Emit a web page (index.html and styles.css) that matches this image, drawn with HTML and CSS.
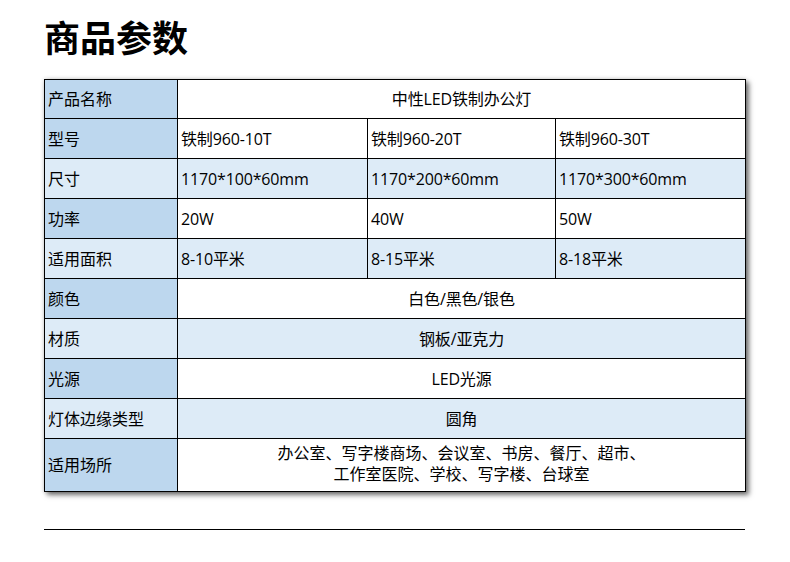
FILE: index.html
```html
<!DOCTYPE html>
<html lang="zh-CN">
<head>
<meta charset="utf-8">
<link rel="stylesheet" href="styles.css">
</head>
<body>
<div class="page">
  <h1 class="title">商品参数</h1>
  <table class="spec">
    <colgroup>
      <col class="c-label">
      <col class="c-val">
      <col class="c-val2">
      <col class="c-val">
    </colgroup>
    <tr class="first">
      <td class="label">产品名称</td>
      <td class="center" colspan="3">中性LED铁制办公灯</td>
    </tr>
    <tr>
      <td class="label">型号</td>
      <td>铁制960-10T</td>
      <td>铁制960-20T</td>
      <td>铁制960-30T</td>
    </tr>
    <tr class="alt">
      <td class="label">尺寸</td>
      <td>1170*100*60mm</td>
      <td>1170*200*60mm</td>
      <td>1170*300*60mm</td>
    </tr>
    <tr>
      <td class="label">功率</td>
      <td>20W</td>
      <td>40W</td>
      <td>50W</td>
    </tr>
    <tr class="alt">
      <td class="label">适用面积</td>
      <td>8-10平米</td>
      <td>8-15平米</td>
      <td>8-18平米</td>
    </tr>
    <tr>
      <td class="label">颜色</td>
      <td class="center" colspan="3">白色/黑色/银色</td>
    </tr>
    <tr class="alt">
      <td class="label">材质</td>
      <td class="center" colspan="3">钢板/亚克力</td>
    </tr>
    <tr>
      <td class="label">光源</td>
      <td class="center" colspan="3">LED光源</td>
    </tr>
    <tr class="alt">
      <td class="label">灯体边缘类型</td>
      <td class="center" colspan="3">圆角</td>
    </tr>
    <tr class="tall">
      <td class="label">适用场所</td>
      <td class="center multi" colspan="3">办公室、写字楼商场、会议室、书房、餐厅、超市、<br>工作室医院、学校、写字楼、台球室</td>
    </tr>
  </table>
  <div class="rule"></div>
</div>
</body>
</html>
```

FILE: styles.css
```css
html, body {
  margin: 0;
  padding: 0;
  background: #ffffff;
}

body {
  font-family: "Open Sans", "Noto Sans CJK SC", sans-serif;
  color: #000000;
}

.page {
  padding: 14px 0 0 44px;
  width: 702px;
}

.title {
  margin: 0;
  font-family: "Noto Sans CJK SC", sans-serif;
  font-size: 36px;
  font-weight: 700;
  line-height: 44px;
  letter-spacing: 0;
}

.spec {
  margin-top: 21px;
  border-collapse: collapse;
  width: 701px;
  table-layout: fixed;
  box-shadow: 3px 3px 5px rgba(0, 0, 0, 0.55), 0 0 4px rgba(0, 0, 0, 0.18);
  background: #ffffff;
}

.c-label { width: 133px; }
.c-val { width: 190px; }
.c-val2 { width: 188px; }

.spec td {
  border: 1px solid #000000;
  height: 39px;
  padding: 0 0 0 3px;
  font-size: 16px;
  line-height: 20px;
  vertical-align: middle;
  white-space: nowrap;
  font-family: "Open Sans", "Noto Sans CJK SC", sans-serif;
  letter-spacing: -0.15px;
}

.spec tr.first td {
  height: 38px;
}

.spec tr.alt td {
  background: #ddebf7;
}

.spec td.label {
  background: #bdd7ee;
  letter-spacing: 0;
}

.spec td.center {
  text-align: center;
  padding: 0;
}

.spec tr.tall td {
  height: 50px;
}

.spec td.multi {
  line-height: 21px;
  padding-bottom: 2px;
  letter-spacing: 0;
}

.rule {
  margin-top: 37px;
  width: 701px;
  height: 1px;
  background: #000000;
}
```
